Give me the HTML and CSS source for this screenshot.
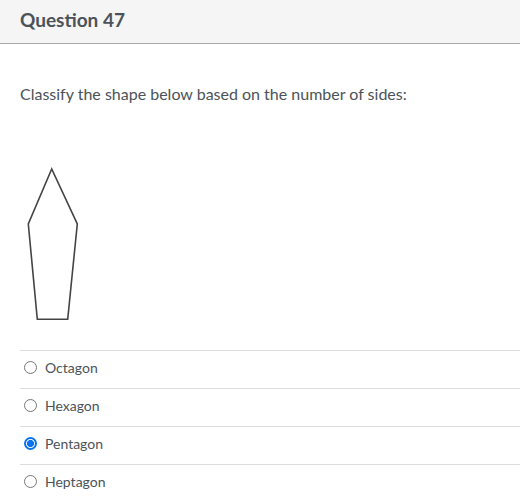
FILE: index.html
```html
<!DOCTYPE html>
<html lang="en">
<head>
<meta charset="utf-8">
<title>Question 47</title>
<link rel="stylesheet" href="styles.css">
</head>
<body>
<div class="quiz">
  <div class="header">
    <h2 class="title">Question 47</h2>
  </div>
  <div class="body">
    <p class="prompt">Classify the shape below based on the number of sides:</p>
    <div class="figure">
      <svg width="80" height="170" viewBox="0 0 80 170" class="shape">
        <polygon points="31.7,9 8.3,64 17.3,159.3 47.7,159.3 57.3,64" fill="none" stroke="#444" stroke-width="1.6" stroke-linejoin="miter"/>
      </svg>
    </div>
    <ul class="answers">
      <li class="answer"><span class="radio"></span><span class="label">Octagon</span></li>
      <li class="answer"><span class="radio"></span><span class="label">Hexagon</span></li>
      <li class="answer"><span class="radio checked"></span><span class="label">Pentagon</span></li>
      <li class="answer"><span class="radio"></span><span class="label">Heptagon</span></li>
    </ul>
  </div>
</div>
</body>
</html>
```
FILE: styles.css
```css
html, body {
  margin: 0;
  padding: 0;
  background: #ffffff;
}
body {
  font-family: Lato, "Open Sans", sans-serif;
  color: #4b5359;
}
.quiz {
  width: 520px;
}
.header {
  height: 44px;
  background: #f5f5f5;
  border-bottom: 1px solid #a8a8a8;
  box-sizing: border-box;
  padding: 0 20px 5px;
  display: flex;
  align-items: center;
}
.title {
  margin: 0;
  font-size: 19px;
  font-weight: 700;
  color: #4b5359;
  line-height: 1;
}
.body {
  padding: 0 0 0 20px;
}
.prompt {
  margin: 0;
  padding-top: 38px;
  font-size: 16px;
  line-height: 24px;
  color: #4b5359;
}
.figure {
  height: 244px;
  padding-top: 54px;
  box-sizing: border-box;
}
.shape {
  display: block;
}
.answers {
  list-style: none;
  margin: 0;
  padding: 0;
}
.answer {
  height: 38px;
  border-top: 1px solid #dcdcdc;
  box-sizing: border-box;
  display: flex;
  align-items: center;
  padding-left: 4px;
  padding-bottom: 4px;
}
.radio {
  width: 13px;
  height: 13px;
  border: 1px solid #767676;
  border-radius: 50%;
  box-sizing: border-box;
  margin-right: 8px;
  background: #fff;
}
.radio.checked {
  border: 2px solid #0a72f0;
  background: radial-gradient(circle, #0a72f0 0 3.3px, #fff 3.8px);
}
.label {
  font-size: 14px;
  color: #4b5359;
}
```
